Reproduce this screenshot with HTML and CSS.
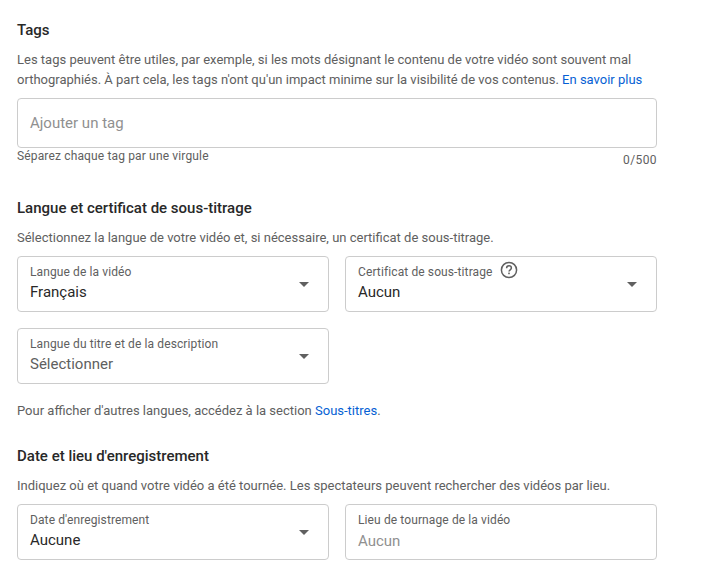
FILE: index.html
```html
<!doctype html>
<html>
  <head>
    <title>Tags</title>
    <link rel="stylesheet" href="styles.css">
  </head>
  <body>
    <div class="page">

      <div class="section section-tags">
        <div class="section-title">Tags</div>
        <div class="section-desc">Les tags peuvent être utiles, par exemple, si les mots désignant le contenu de votre vidéo sont souvent mal<br>orthographiés. À part cela, les tags n'ont qu'un impact minime sur la visibilité de vos contenus. <a class="link" href="#">En savoir plus</a></div>
        <div class="box tag-box">
          <span class="placeholder">Ajouter un tag</span>
        </div>
        <div class="tag-footer">
          <span class="hint">Séparez chaque tag par une virgule</span>
          <span class="counter">0/500</span>
        </div>
      </div>

      <div class="section section-lang">
        <div class="section-title">Langue et certificat de sous-titrage</div>
        <div class="section-desc">Sélectionnez la langue de votre vidéo et, si nécessaire, un certificat de sous-titrage.</div>
        <div class="field-grid">
          <div class="box field">
            <div class="field-text">
              <div class="field-label">Langue de la vidéo</div>
              <div class="field-value">Français</div>
            </div>
            <div class="arrow"></div>
          </div>
          <div class="box field">
            <div class="field-text">
              <div class="field-label">Certificat de sous-titrage
                <svg class="help" width="20" height="20" viewBox="0 0 20 20">
                  <circle cx="10" cy="10" r="7.6" fill="none" stroke="#606060" stroke-width="1.5"/>
                  <path d="M7.6 8.2c0-1.4 1.1-2.4 2.4-2.4s2.4 1 2.4 2.2c0 1.8-2.4 1.9-2.4 3.6" fill="none" stroke="#606060" stroke-width="1.5"/>
                  <rect x="9.2" y="12.6" width="1.6" height="1.6" fill="#606060"/>
                </svg>
              </div>
              <div class="field-value">Aucun</div>
            </div>
            <div class="arrow"></div>
          </div>
          <div class="box field">
            <div class="field-text">
              <div class="field-label">Langue du titre et de la description</div>
              <div class="field-value muted">Sélectionner</div>
            </div>
            <div class="arrow"></div>
          </div>
        </div>
        <div class="section-note">Pour afficher d'autres langues, accédez à la section <a class="link" href="#">Sous-titres</a>.</div>
      </div>

      <div class="section section-date">
        <div class="section-title">Date et lieu d'enregistrement</div>
        <div class="section-desc">Indiquez où et quand votre vidéo a été tournée. Les spectateurs peuvent rechercher des vidéos par lieu.</div>
        <div class="field-grid">
          <div class="box field">
            <div class="field-text">
              <div class="field-label">Date d'enregistrement</div>
              <div class="field-value">Aucune</div>
            </div>
            <div class="arrow"></div>
          </div>
          <div class="box field">
            <div class="field-text">
              <div class="field-label">Lieu de tournage de la vidéo</div>
              <div class="field-value placeholder-value">Aucun</div>
            </div>
          </div>
        </div>
      </div>

    </div>
  </body>
</html>
```

FILE: styles.css
```css
html {
  box-sizing: border-box;
}
*, *:before, *:after {
  box-sizing: inherit;
}

html, body {
  margin: 0;
  padding: 0;
  background-color: #fff;
  font-family: Roboto, "Liberation Sans", sans-serif;
}

.page {
  width: 640px;
  margin-left: 17px;
  padding-top: 21px;
}

.section-title {
  font-size: 15px;
  line-height: 18px;
  font-weight: 500;
  color: #282828;
}

.section-desc, .section-note {
  font-size: 13px;
  line-height: 20px;
  color: #606060;
}

.section-desc {
  margin-top: 11px;
}

.section-lang {
  margin-top: 31px;
}

.section-date {
  margin-top: 26px;
}

.link {
  color: #065fd4;
  text-decoration: none;
}

.box {
  border: 1px solid #ccc;
  border-radius: 4px;
  background-color: #fff;
}

.tag-box {
  height: 50px;
  margin-top: 8px;
  padding-left: 12px;
  display: flex;
  align-items: center;
}

.placeholder {
  font-size: 15px;
  color: #909090;
}

.tag-footer {
  display: flex;
  justify-content: space-between;
  font-size: 12px;
  letter-spacing: .15px;
  color: #606060;
}

.hint {
  line-height: 16px;
}

.counter {
  line-height: 16px;
  margin-top: 4px;
  letter-spacing: .4px;
}

.field-grid {
  display: grid;
  grid-template-columns: 312px 312px;
  column-gap: 16px;
  row-gap: 16px;
  margin-top: 8px;
}

.field {
  height: 56px;
  padding: 0 19px 0 12px;
  display: flex;
  align-items: center;
  justify-content: space-between;
}

.field-text {
  padding-bottom: 2px;
}

.field-label {
  font-size: 12px;
  line-height: 16px;
  letter-spacing: .11px;
  color: #606060;
  display: flex;
  align-items: center;
  height: 16px;
}

.help {
  margin-left: 6px;
  margin-top: -4px;
}

.field-value {
  font-size: 15px;
  line-height: 20px;
  margin-top: 2px;
  color: #282828;
}

.field-value.muted {
  color: #606060;
}

.field-value.placeholder-value {
  color: #909090;
  margin-top: 3px;
}

.arrow {
  width: 0;
  height: 0;
  border-left: 5px solid transparent;
  border-right: 5px solid transparent;
  border-top: 5px solid #606060;
}

.section-note {
  margin-top: 17px;
}
```
